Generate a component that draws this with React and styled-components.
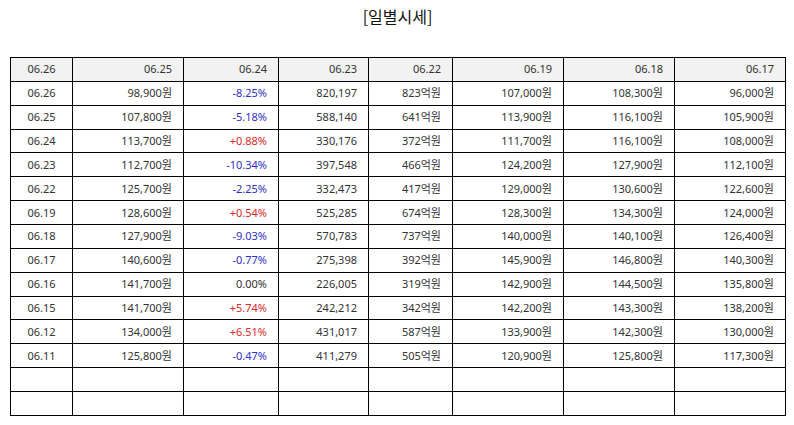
import React from "react";
import styled, { createGlobalStyle } from "styled-components";

const Global = createGlobalStyle`
  html, body { margin: 0; padding: 0; background: #fff; }
  body { font-family: "Noto Sans", "Noto Sans CJK KR", sans-serif; color: #222; }
`;

const Page = styled.div`
  padding: 6px 9px 0 10px;
`;

const Title = styled.h1`
  margin: 0 0 30px;
  font-family: "Noto Sans CJK KR", sans-serif;
  font-weight: 400;
  font-size: 16px;
  line-height: 21px;
  text-align: center;
  color: #111;
`;

const Table = styled.table`
  width: 775px;
  table-layout: fixed;
  border-collapse: collapse;
  border: 1px solid #000;
  font-family: "Noto Sans", "Noto Sans CJK KR", sans-serif;
  font-size: 11px;
  color: #333;
`;

const Row = styled.tr`
  height: 23.87px;
  background: ${(p) => (p.$head ? "#f2f2f2" : "#fff")};
`;

const Cell = styled.td`
  border: 1px solid #000;
  padding: ${(p) => (p.$center ? "0 2px" : "0 11px 0 4px")};
  text-align: ${(p) => (p.$center ? "center" : "right")};
  color: ${(p) => (p.$tone === "up" ? "#e02a2a" : p.$tone === "down" ? "#3030d0" : "#333")};
  white-space: nowrap;
  line-height: 14px;
  vertical-align: middle;
`;

const widths = [62, 111, 95, 90, 84, 111, 111, 111];

const header = ["06.26", "06.25", "06.24", "06.23", "06.22", "06.19", "06.18", "06.17"];

const rows = [
  ["06.26", "98,900원", "-8.25%", "820,197", "823억원", "107,000원", "108,300원", "96,000원"],
  ["06.25", "107,800원", "-5.18%", "588,140", "641억원", "113,900원", "116,100원", "105,900원"],
  ["06.24", "113,700원", "+0.88%", "330,176", "372억원", "111,700원", "116,100원", "108,000원"],
  ["06.23", "112,700원", "-10.34%", "397,548", "466억원", "124,200원", "127,900원", "112,100원"],
  ["06.22", "125,700원", "-2.25%", "332,473", "417억원", "129,000원", "130,600원", "122,600원"],
  ["06.19", "128,600원", "+0.54%", "525,285", "674억원", "128,300원", "134,300원", "124,000원"],
  ["06.18", "127,900원", "-9.03%", "570,783", "737억원", "140,000원", "140,100원", "126,400원"],
  ["06.17", "140,600원", "-0.77%", "275,398", "392억원", "145,900원", "146,800원", "140,300원"],
  ["06.16", "141,700원", "0.00%", "226,005", "319억원", "142,900원", "144,500원", "135,800원"],
  ["06.15", "141,700원", "+5.74%", "242,212", "342억원", "142,200원", "143,300원", "138,200원"],
  ["06.12", "134,000원", "+6.51%", "431,017", "587억원", "133,900원", "142,300원", "130,000원"],
  ["06.11", "125,800원", "-0.47%", "411,279", "505억원", "120,900원", "125,800원", "117,300원"],
  ["", "", "", "", "", "", "", ""],
  ["", "", "", "", "", "", "", ""],
];

const toneOf = (v) => (v.startsWith("+") ? "up" : v.startsWith("-") ? "down" : undefined);

export default function App() {
  return (
    <Page>
      <Global />
      <Title>[일별시세]</Title>
      <Table>
        <colgroup>
          {widths.map((w, i) => (
            <col key={i} style={{ width: w }} />
          ))}
        </colgroup>
        <tbody>
          <Row $head>
            {header.map((h, i) => (
              <Cell key={i} $center={i === 0}>
                {h}
              </Cell>
            ))}
          </Row>
          {rows.map((r, ri) => (
            <Row key={ri}>
              {r.map((v, ci) => (
                <Cell key={ci} $center={ci === 0} $tone={ci === 2 ? toneOf(v) : undefined}>
                  {v}
                </Cell>
              ))}
            </Row>
          ))}
        </tbody>
      </Table>
    </Page>
  );
}
